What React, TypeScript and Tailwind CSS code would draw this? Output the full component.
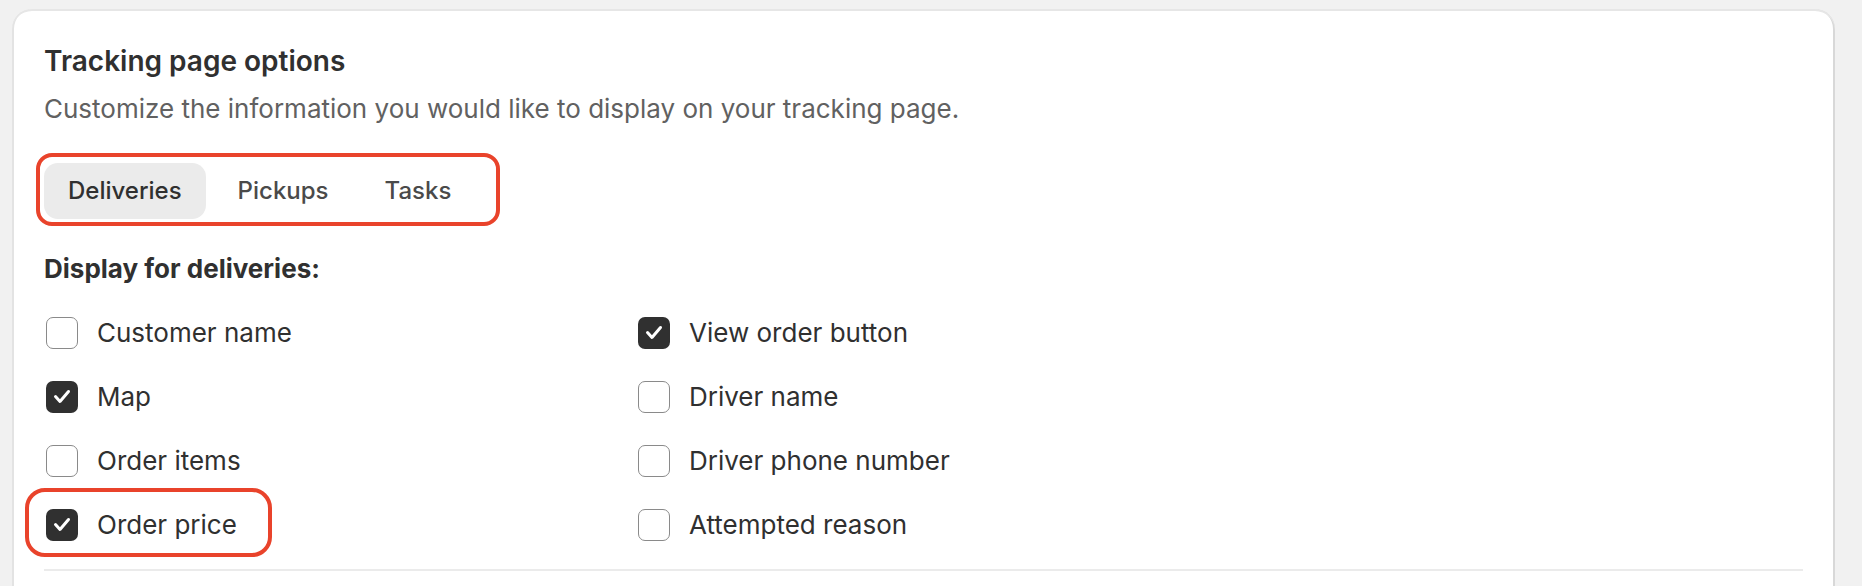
import { useState } from "react"

interface Option {
  id: string
  label: string
}

const leftOptions: Option[] = [
  { id: "customer", label: "Customer name" },
  { id: "map", label: "Map" },
  { id: "items", label: "Order items" },
  { id: "price", label: "Order price" },
]

const rightOptions: Option[] = [
  { id: "viewOrder", label: "View order button" },
  { id: "driver", label: "Driver name" },
  { id: "phone", label: "Driver phone number" },
  { id: "attempted", label: "Attempted reason" },
]

const tabs = [
  { id: "deliveries", label: "Deliveries" },
  { id: "pickups", label: "Pickups" },
  { id: "tasks", label: "Tasks" },
]

function Checkbox({ checked, onChange }: { checked: boolean; onChange: () => void }) {
  return (
    <button
      type="button"
      onClick={onChange}
      className={`ml-[2px] flex h-[32px] w-[32px] shrink-0 items-center justify-center rounded-[7px] ${
        checked ? "bg-[#303030]" : "border-[1.5px] border-[#8a8a8a] bg-white"
      }`}
    >
      {checked && (
        <svg width="32" height="32" viewBox="0 0 32 32" fill="none">
          <path
            d="M9.5 15.5 L14 20.5 L22.5 10.5"
            stroke="white"
            strokeWidth="3"
            strokeLinecap="round"
            strokeLinejoin="round"
          />
        </svg>
      )}
    </button>
  )
}

export default function App() {
  const [activeTab, setActiveTab] = useState("deliveries")
  const [checked, setChecked] = useState<Record<string, boolean>>({
    customer: false,
    map: true,
    items: false,
    price: true,
    viewOrder: true,
    driver: false,
    phone: false,
    attempted: false,
  })

  const toggle = (id: string) => setChecked((prev) => ({ ...prev, [id]: !prev[id] }))

  const row = (opt: Option) => (
    <div key={opt.id} className="relative flex h-[40px] items-center gap-[19px]">
      {opt.id === "price" && (
        <div className="pointer-events-none absolute left-[-19px] top-[-17px] h-[69px] w-[247px] rounded-[20px] border-4 border-[#e9432b]" />
      )}
      <Checkbox checked={checked[opt.id]} onChange={() => toggle(opt.id)} />
      <span className="text-[26px] leading-[40px] text-[#303030]">{opt.label}</span>
    </div>
  )

  return (
    <div
      className="min-h-screen bg-[#f1f1f1] pl-[12px] pt-[9px]"
      style={{ fontFamily: "Inter, 'Noto Sans', sans-serif" }}
    >
      <div className="w-[1823px] rounded-t-[20px] bg-white px-[32px] pb-[60px] pt-[32px] shadow-[inset_0_2px_0_0_#e6e6e6,inset_2px_0_0_0_#e3e3e3,inset_-2px_0_0_0_#d8d8d8]">
        <h2 className="text-[28px] font-semibold leading-[40px] text-[#303030]">Tracking page options</h2>
        <p className="mt-[8px] text-[26px] leading-[40px] text-[#616161]">
          Customize the information you would like to display on your tracking page.
        </p>

        <div className="relative mt-[34px] inline-flex gap-[8px]">
          <div className="pointer-events-none absolute left-[-8px] top-[-10px] h-[73px] w-[464px] rounded-[16px] border-4 border-[#e9432b]" />
          {tabs.map((tab) => (
            <button
              key={tab.id}
              type="button"
              onClick={() => setActiveTab(tab.id)}
              className={`h-[56px] rounded-[14px] px-[24px] text-[24px] font-[550] leading-[40px] ${
                activeTab === tab.id ? "bg-[#ebebeb] text-[#303030]" : "text-[#4a4a4a]"
              }`}
            >
              {tab.label}
            </button>
          ))}
        </div>

        <h3 className="mt-[30px] text-[26px] font-[650] leading-[40px] text-[#303030]">
          Display for deliveries:
        </h3>

        <div className="mt-[24px] grid grid-cols-[592px_1fr]">
          <div className="flex flex-col gap-[24px]">{leftOptions.map(row)}</div>
          <div className="flex flex-col gap-[24px]">{rightOptions.map(row)}</div>
        </div>

        <div className="mt-[24px] h-[2px] bg-[#ebebeb]" />
      </div>
    </div>
  )
}
